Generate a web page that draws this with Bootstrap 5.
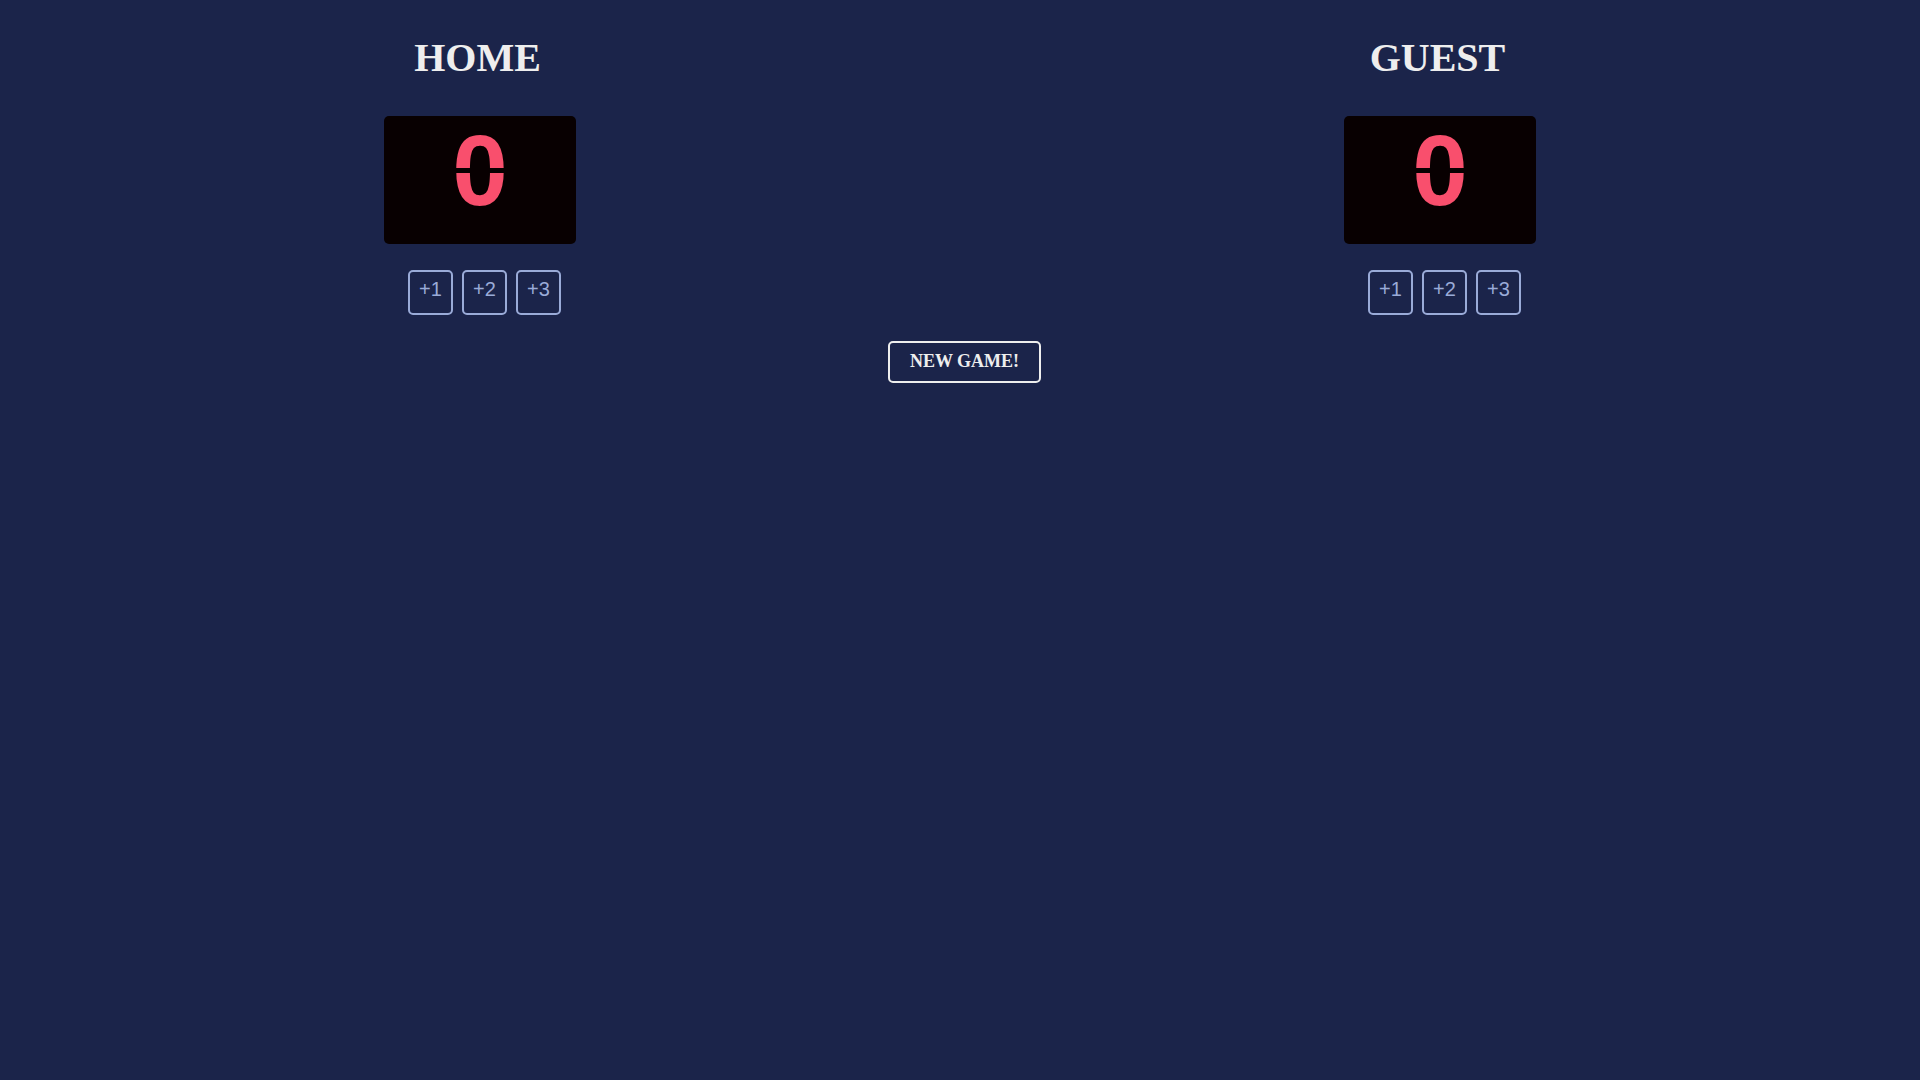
<!DOCTYPE html>
<html lang="en">
<head>
<meta charset="utf-8">
<meta name="viewport" content="width=device-width, initial-scale=1">
<title>Basketball Scoreboard</title>
<link rel="stylesheet" href="https://cdn.jsdelivr.net/npm/bootstrap@5.3.0/dist/css/bootstrap.min.css">
<style>
  body { background: #1b244a; color: #eeeeee; font-family: "Liberation Serif", serif; }
  .team-name { font-size: 40px; line-height: 46px; margin: 35px 5px 35px 0; }
  .score-board { width: 192px; height: 128px; padding-top: 4px; margin-bottom: 26px; background: #080001; border-radius: 5px; }
  /* the fill is split across the middle, like the segments of an LED digit */
  .score-value {
    height: 100px; font: bold 100px/100px "Liberation Sans", sans-serif; color: transparent;
    background: linear-gradient(#f94f6d 48px, transparent 48px 53px, #f94f6d 53px);
    -webkit-background-clip: text; background-clip: text;
  }
  .btn-points, .btn-reset { border-width: 2px; border-radius: 5px; margin-left: 9px; }
  .btn-points {
    --bs-btn-color: #9aabd8; --bs-btn-border-color: #9aabd8;
    --bs-btn-hover-color: #1b244a; --bs-btn-hover-bg: #9aabd8;
    width: 45px; height: 45px; padding: 0 0 8px; font: 20px/32px "Liberation Sans", sans-serif;
  }
  .btn-reset {
    --bs-btn-color: #eeeeee; --bs-btn-border-color: #eeeeee;
    --bs-btn-hover-color: #1b244a; --bs-btn-hover-bg: #eeeeee;
    padding: 8px 20px 10px; margin-top: 26px; font: bold 18px/20px "Liberation Serif", serif;
  }
</style>
</head>
<body>
<main class="container-fluid p-0 overflow-hidden">
  <div class="row g-0">
    <section class="col-6 d-flex flex-column align-items-center">
      <h1 class="team-name fw-bold">HOME</h1>
      <div class="score-board d-flex justify-content-center"><span class="score-value" id="home-score">0</span></div>
      <div class="d-flex">
        <button type="button" class="btn btn-points" data-team="home" data-points="1">+1</button>
        <button type="button" class="btn btn-points" data-team="home" data-points="2">+2</button>
        <button type="button" class="btn btn-points" data-team="home" data-points="3">+3</button>
      </div>
    </section>
    <section class="col-6 d-flex flex-column align-items-center">
      <h1 class="team-name fw-bold">GUEST</h1>
      <div class="score-board d-flex justify-content-center"><span class="score-value" id="guest-score">0</span></div>
      <div class="d-flex">
        <button type="button" class="btn btn-points" data-team="guest" data-points="1">+1</button>
        <button type="button" class="btn btn-points" data-team="guest" data-points="2">+2</button>
        <button type="button" class="btn btn-points" data-team="guest" data-points="3">+3</button>
      </div>
    </section>
  </div>
  <div class="d-flex justify-content-center">
    <button type="button" class="btn btn-reset" id="new-game">NEW GAME!</button>
  </div>
</main>
<script src="https://cdn.jsdelivr.net/npm/bootstrap@5.3.0/dist/js/bootstrap.bundle.min.js"></script>
<script>
  const scoreOf = team => document.getElementById(team + "-score");
  document.querySelectorAll("[data-points]").forEach(button => {
    button.addEventListener("click", () => {
      const score = scoreOf(button.dataset.team);
      score.textContent = Number(score.textContent) + Number(button.dataset.points);
    });
  });
  document.getElementById("new-game").addEventListener("click", () => {
    scoreOf("home").textContent = 0;
    scoreOf("guest").textContent = 0;
  });
</script>
</body>
</html>
